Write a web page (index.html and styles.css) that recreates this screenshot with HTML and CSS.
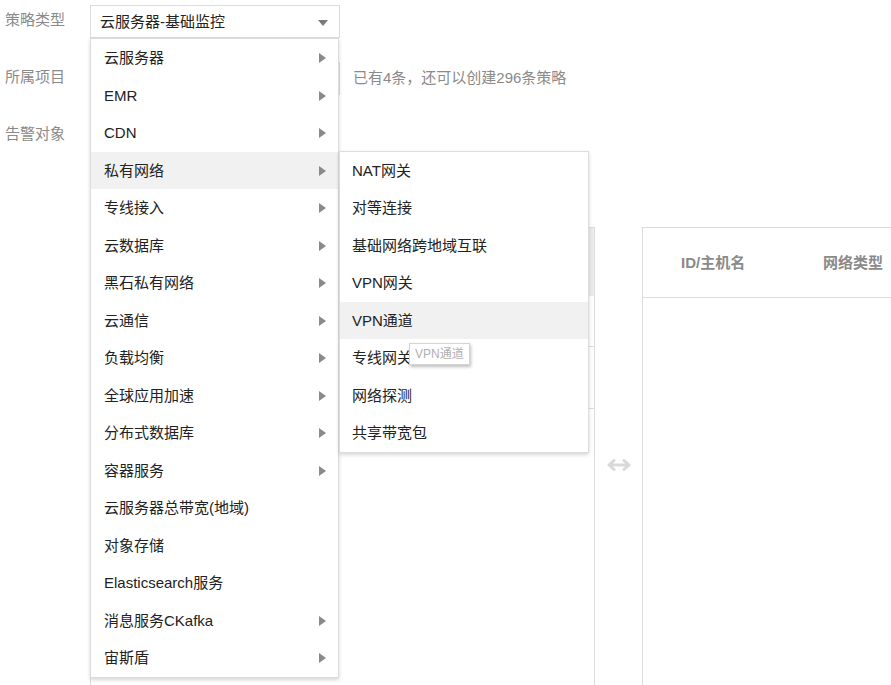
FILE: index.html
```html
<!DOCTYPE html>
<html lang="zh-CN">
<head>
<meta charset="utf-8">
<title>策略</title>
<link rel="stylesheet" href="styles.css">
</head>
<body>
<div class="page">
  <div class="form">
    <div class="row">
      <div class="label">策略类型</div>
      <div class="select-wrap">
        <div class="select">
          <span class="select-text">云服务器-基础监控</span>
          <i class="caret"></i>
        </div>
        <ul class="menu">
          <li class="item"><span>云服务器</span><i class="tri"></i></li>
          <li class="item"><span>EMR</span><i class="tri"></i></li>
          <li class="item"><span>CDN</span><i class="tri"></i></li>
          <li class="item active"><span>私有网络</span><i class="tri"></i>
            <ul class="menu submenu">
              <li class="item"><span>NAT网关</span></li>
              <li class="item"><span>对等连接</span></li>
              <li class="item"><span>基础网络跨地域互联</span></li>
              <li class="item"><span>VPN网关</span></li>
              <li class="item active"><span>VPN通道</span><div class="tooltip">VPN通道</div></li>
              <li class="item"><span>专线网关</span></li>
              <li class="item"><span>网络探测</span></li>
              <li class="item"><span>共享带宽包</span></li>
            </ul>
          </li>
          <li class="item"><span>专线接入</span><i class="tri"></i></li>
          <li class="item"><span>云数据库</span><i class="tri"></i></li>
          <li class="item"><span>黑石私有网络</span><i class="tri"></i></li>
          <li class="item"><span>云通信</span><i class="tri"></i></li>
          <li class="item"><span>负载均衡</span><i class="tri"></i></li>
          <li class="item"><span>全球应用加速</span><i class="tri"></i></li>
          <li class="item"><span>分布式数据库</span><i class="tri"></i></li>
          <li class="item"><span>容器服务</span><i class="tri"></i></li>
          <li class="item"><span>云服务器总带宽(地域)</span></li>
          <li class="item"><span>对象存储</span></li>
          <li class="item"><span>Elasticsearch服务</span></li>
          <li class="item"><span>消息服务CKafka</span><i class="tri"></i></li>
          <li class="item"><span>宙斯盾</span><i class="tri"></i></li>
        </ul>
      </div>
    </div>
    <div class="row">
      <div class="label">所属项目</div>
      <div class="select"></div>
      <span class="hint">已有4条，还可以创建296条策略</span>
    </div>
    <div class="row">
      <div class="label">告警对象</div>
    </div>
    <div class="transfer">
      <div class="pane left-pane">
        <div class="left-head"></div>
        <div class="left-row r1"></div>
        <div class="left-row r2"></div>
      </div>
      <div class="mid">
        <svg class="swap" width="26" height="12" viewBox="0 0 26 12" aria-hidden="true">
          <path d="M3 6 H23 M8 1.5 L3 6 L8 10.5 M18 1.5 L23 6 L18 10.5" fill="none" stroke="#d9d9d9" stroke-width="3" stroke-linecap="round" stroke-linejoin="round"/>
        </svg>
      </div>
      <div class="pane right-pane">
        <div class="right-head">
          <span class="th th-id">ID/主机名</span>
          <span class="th">网络类型</span>
        </div>
      </div>
    </div>
  </div>
</div>
</body>
</html>
```

FILE: styles.css
```css
* { box-sizing: border-box; }
html, body { margin: 0; padding: 0; background: #fff; }
body {
  font-family: "Liberation Sans", "Noto Sans CJK SC", sans-serif;
  font-size: 15px;
  color: #222;
}
.page {
  width: 891px;
  height: 685px;
  overflow: hidden;
  position: relative;
}
.form {
  padding-top: 5px;
  padding-left: 5px;
}
.row {
  display: flex;
  align-items: center;
  height: 33px;
  margin-bottom: 24px;
}
.label {
  width: 85px;
  color: #8a8a8a;
  line-height: 20px;
  margin-top: -3px;
}
.select-wrap {
  position: relative;
  z-index: 10;
}
.select {
  width: 250px;
  height: 33px;
  border: 1px solid #dcdcdc;
  background: #fff;
  display: flex;
  align-items: center;
  justify-content: space-between;
  padding: 0 11px 0 9px;
}
.select-text {
  line-height: 20px;
  color: #222;
}
.caret {
  width: 0;
  height: 0;
  border-left: 5px solid transparent;
  border-right: 5px solid transparent;
  border-top: 6px solid #7a7a7a;
  margin-top: 2px;
}
.hint {
  margin-left: 13px;
  color: #8a8a8a;
  line-height: 20px;
  margin-top: -2px;
}
.menu {
  list-style: none;
  margin: 0;
  padding: 0;
  position: absolute;
  top: 33px;
  left: 0;
  width: 249px;
  background: #fff;
  border: 1px solid #dcdcdc;
  box-shadow: 0 2px 4px rgba(0, 0, 0, 0.16);
}
.item {
  position: relative;
  height: 37.5px;
  display: flex;
  align-items: center;
  justify-content: space-between;
  padding: 1px 12px 0 13px;
  line-height: 20px;
  color: #222;
  white-space: nowrap;
}
.item.active {
  background: #f1f1f1;
}
.tri {
  width: 0;
  height: 0;
  border-top: 5px solid transparent;
  border-bottom: 5px solid transparent;
  border-left: 7px solid #8a8a8a;
}
.submenu {
  top: -1px;
  left: calc(100% + 1px);
  width: 250px;
  z-index: 11;
}
.submenu .item {
  padding-left: 12px;
}
.submenu .item.active {
  z-index: 2;
}
.tooltip {
  position: absolute;
  top: 41px;
  left: 69px;
  height: 22px;
  padding: 0 5px;
  background: #fff;
  border: 1px solid #d4d4d4;
  box-shadow: 1px 2px 3px rgba(0, 0, 0, 0.25);
  color: #b0b0b0;
  font-size: 12px;
  line-height: 20px;
  z-index: 3;
}
.transfer {
  display: flex;
  margin-left: 85px;
  margin-top: 75px;
  height: 480px;
}
.pane {
  border: 1px solid #dcdcdc;
  background: #fff;
}
.left-pane {
  width: 505px;
  flex: none;
}
.left-head {
  height: 68px;
  background: #ebebeb;
}
.left-row {
  border-bottom: 1px solid #dcdcdc;
}
.r1 { height: 51px; }
.r2 { height: 62px; }
.mid {
  width: 47px;
  flex: none;
  display: flex;
  justify-content: center;
  padding-top: 232px;
}
.swap { display: block; }
.right-pane {
  width: 400px;
  flex: none;
}
.right-head {
  height: 70px;
  border-bottom: 1px solid #dcdcdc;
  display: flex;
  align-items: center;
  padding-left: 38px;
}
.th {
  font-weight: bold;
  color: #8a8a8a;
  line-height: 20px;
}
.th-id {
  width: 142px;
}
```
